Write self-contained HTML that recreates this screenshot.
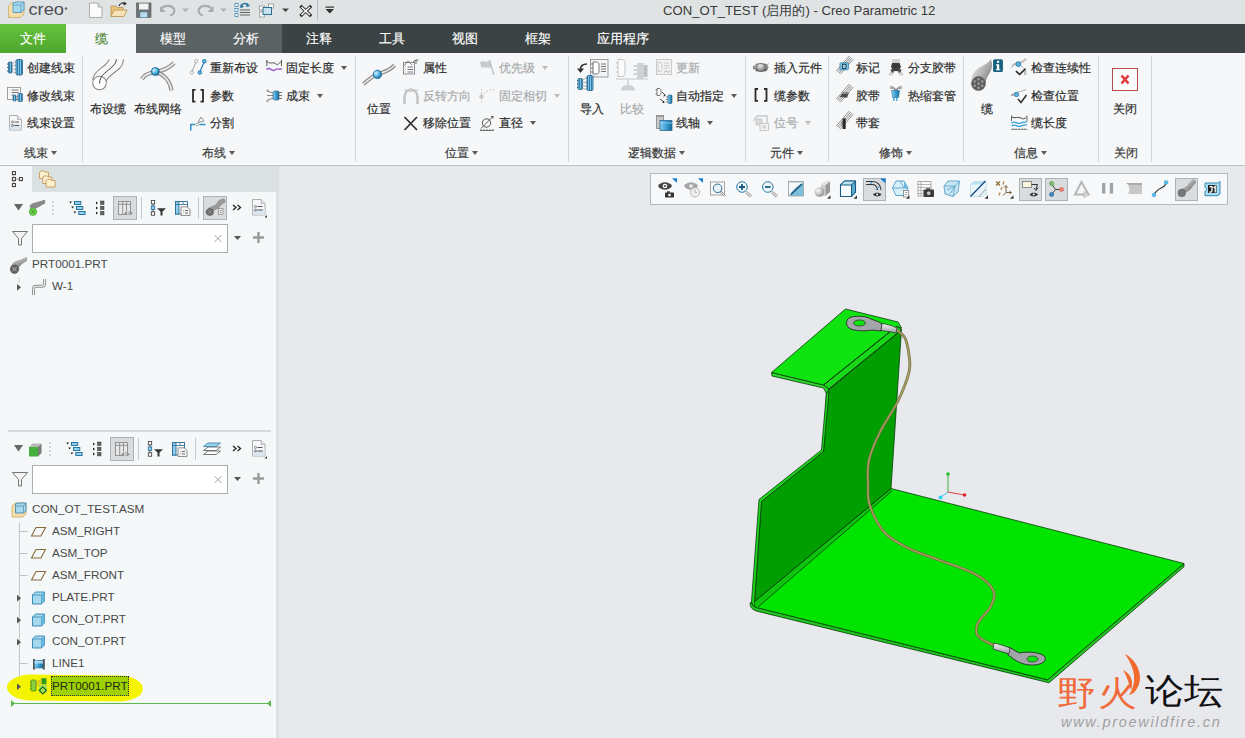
<!DOCTYPE html>
<html><head><meta charset="utf-8">
<style>
*{margin:0;padding:0;box-sizing:border-box}
html,body{width:1245px;height:738px;overflow:hidden;background:#e7e8ec;font-family:"Liberation Sans",sans-serif;font-size:12px;color:#333}
.a{position:absolute}
#title{left:0;top:0;width:1245px;height:24px;background:#dfe3e4}
#tabs{left:0;top:24px;width:1245px;height:29px;background:#3b4345}
.tab{position:absolute;top:0;height:29px;line-height:29px;text-align:center;color:#fff;font-size:13.4px;-webkit-text-stroke:0.15px currentColor}
#ribbon{left:0;top:53px;width:1245px;height:113px;background:#f5f7f8;border-bottom:1px solid #b9c0c1;box-shadow:inset 0 -1px 0 #fdfefe}
.sep{position:absolute;top:3px;width:1px;height:106px;background:#d3d7d9}
.t{position:absolute;white-space:nowrap;font-size:12px;line-height:14px;color:#2e2e2e;-webkit-text-stroke:0.2px #2e2e2e}
.t.g{color:#a9abad;-webkit-text-stroke:0.2px #a9abad}
.gl{position:absolute;top:146px;white-space:nowrap;font-size:12px;line-height:14px;color:#3a3a3a;-webkit-text-stroke:0.2px #3a3a3a}
.dd{display:inline-block;width:0;height:0;border-left:3.7px solid transparent;border-right:3.7px solid transparent;border-top:4px solid #5a5a5a;vertical-align:middle;margin-left:3px;position:relative;top:-1px}
.vs{top:56px;width:1px;height:106px;background:#d3d7d9}
.g2{border-top-color:#bbb}
.sel{width:24px;height:24px;background:#d9dcde;border:1px solid #aeb2b5}
.sbox{left:32px;width:196px;height:29px;background:#fff;border:1px solid #a9aeb1}
.tr{font-size:11.7px;color:#484848;-webkit-text-stroke:0}
#lp{left:0;top:166px;width:279px;height:572px;background:#dbe0e0}
#vp{left:279px;top:166px;width:966px;height:572px;background:#e8e9ed}
</style></head><body>
<div id="title" class="a"></div>
<div class="a" style="left:663px;top:3px;font-size:13.15px;line-height:16px;color:#3a3a3a;white-space:nowrap" id="ttl">CON_OT_TEST (启用的) - Creo Parametric 12</div>
<div class="a" style="left:317px;top:0px;width:1px;height:21px;background:#b9bec0"></div>
<!-- title icons -->
<svg class="a" style="left:0;top:0" width="340" height="24" viewBox="0 0 340 24">
 <!-- creo logo -->
 <path d="M8.5,6 L12,2.5 L24,2.5 L24,14 L20.5,17.5 L8.5,17.5Z" fill="#f6deaa" stroke="#c8a868" stroke-width="0.8"/>
 <path d="M13,3 L16,2 L24,2 L24,10 L21,12.5 L13,12.5Z" fill="#a6d8ee" stroke="#4a90b8" stroke-width="0.8"/>
 <path d="M13,5 L21,5 L21,12.5 M21,5 L24,2" fill="none" stroke="#4a90b8" stroke-width="0.7"/>
 <text x="28.5" y="14.5" font-family="Liberation Sans" font-size="16.5" fill="#4b5054" textLength="35.5" lengthAdjust="spacingAndGlyphs">creo</text>
 <circle cx="66" cy="8.5" r="1.2" fill="#666"/>
 <!-- new -->
 <path d="M89.5,3 L98,3 L102,7 L102,17.5 L89.5,17.5Z" fill="#fbfbfb" stroke="#9a9a9a" stroke-width="0.8"/>
 <path d="M98,3 L98,7 L102,7" fill="#ddd" stroke="#9a9a9a" stroke-width="0.7"/>
 <!-- open -->
 <path d="M111,16.5 L111,6 L116,6 L117.5,7.5 L123,7.5 L123,10" fill="#e8c47c" stroke="#b8904c" stroke-width="0.8"/>
 <path d="M111,16.5 L114,10 L127,10 L124,16.5Z" fill="#f6e2b4" stroke="#b8904c" stroke-width="0.8"/>
 <path d="M119,6 C120,3 123,2.5 125,3.5" fill="none" stroke="#333" stroke-width="1.3"/>
 <path d="M124,1.5 L127,4 L123.5,5.5Z" fill="#333"/>
 <!-- save -->
 <rect x="136.5" y="3" width="14.5" height="14.5" fill="#6f7274" stroke="#555" stroke-width="0.6"/>
 <rect x="139" y="3.5" width="9.5" height="6" fill="#f4f4f4"/>
 <rect x="140" y="12" width="7.5" height="5.5" fill="#bcdcea" stroke="#4a8ab0" stroke-width="0.6"/>
 <!-- undo -->
 <path d="M162,8 C165,5 172,5 174,9 C175.5,12 173,15 170,15.5" fill="none" stroke="#a9acae" stroke-width="2.2"/>
 <path d="M160,6 L160,12 L166,12Z" fill="#a9acae"/>
 <path d="M182,8.5 L189,8.5 L185.5,12Z" fill="#b0b3b5"/>
 <!-- redo -->
 <path d="M211,8 C208,5 201,5 199,9 C197.5,12 200,15 203,15.5" fill="none" stroke="#a9acae" stroke-width="2.2"/>
 <path d="M213.5,6 L213.5,12 L207.5,12Z" fill="#a9acae"/>
 <path d="M220,8.5 L227,8.5 L223.5,12Z" fill="#b0b3b5"/>
 <!-- regen -->
 <rect x="235" y="3.5" width="3" height="3" fill="#fff" stroke="#3a88b8" stroke-width="0.8"/>
 <rect x="235" y="8.5" width="3" height="3" fill="#fff" stroke="#3a88b8" stroke-width="0.8"/>
 <rect x="235" y="13.5" width="3" height="3" fill="#fff" stroke="#3a88b8" stroke-width="0.8"/>
 <path d="M240,10 L250,10 M240,12.5 L250,12.5 M240,15 L250,15" stroke="#555" stroke-width="0.9"/>
 <path d="M241,6 C242,3 246,3 248,5" fill="none" stroke="#1f6fa0" stroke-width="1.5"/>
 <path d="M247,3 L250,6 L246,7Z" fill="#1f6fa0"/>
 <path d="M241,4 L240,8 L244,7Z" fill="#1f6fa0"/>
 <!-- window -->
 <rect x="259.5" y="6" width="5" height="4" fill="#fff" stroke="#888" stroke-width="0.7"/>
 <rect x="259.5" y="12" width="5" height="5" fill="#fff" stroke="#888" stroke-width="0.7"/>
 <rect x="268.5" y="4" width="5" height="4" fill="#fff" stroke="#888" stroke-width="0.7"/>
 <rect x="263" y="7.5" width="8.5" height="7" fill="#c6e2f0" stroke="#2e6d92" stroke-width="1"/>
 <path d="M282,8.5 L289,8.5 L285.5,12Z" fill="#444"/>
 <!-- close -->
 <path d="M301.5,7 L310,15 M310,7 L301.5,15" stroke="#2a2a2a" stroke-width="3.2" stroke-linecap="square"/>
 <path d="M301.5,7 L310,15 M310,7 L301.5,15" stroke="#fff" stroke-width="1.5"/>
 <!-- custom dropdown -->
 <rect x="325.5" y="6.5" width="8.5" height="1.2" fill="#333"/>
 <path d="M325.5,9 L334,9 L329.75,13.5Z" fill="#333"/>
</svg>


<div id="tabs" class="a">
  <div class="tab" style="left:0;width:66px;background:linear-gradient(#66c23e,#4ea62c)">文件</div>
  <div class="tab" style="left:66px;width:70px;background:#f5f7f8;color:#3f7f2a">缆</div>
  <div class="tab" style="left:136px;width:146px;background:#5a6264"></div>
  <div class="tab" style="left:136px;width:73px">模型</div>
  <div class="tab" style="left:209px;width:73px">分析</div>
  <div class="tab" style="left:282px;width:73px">注释</div>
  <div class="tab" style="left:355px;width:73px">工具</div>
  <div class="tab" style="left:428px;width:73px">视图</div>
  <div class="tab" style="left:501px;width:73px">框架</div>
  <div class="tab" style="left:574px;width:98px">应用程序</div>
</div>

<div id="ribbon" class="a"></div>
<!-- separators -->
<div class="a vs" style="left:82px"></div>
<div class="a vs" style="left:355px"></div>
<div class="a vs" style="left:568px"></div>
<div class="a vs" style="left:745px"></div>
<div class="a vs" style="left:828px"></div>
<div class="a vs" style="left:963px"></div>
<div class="a vs" style="left:1098px"></div>
<div class="a vs" style="left:1151px"></div>
<!-- group 1 -->
<div class="t" style="left:27px;top:61px">创建线束</div>
<div class="t" style="left:27px;top:89px">修改线束</div>
<div class="t" style="left:27px;top:116px">线束设置</div>
<div class="gl" style="left:24px">线束<span class="dd"></span></div>
<!-- group 2 -->
<div class="t" style="left:90px;top:102px">布设缆</div>
<div class="t" style="left:134px;top:102px">布线网络</div>
<div class="t" style="left:210px;top:61px">重新布设</div>
<div class="t" style="left:210px;top:89px">参数</div>
<div class="t" style="left:210px;top:116px">分割</div>
<div class="t" style="left:286px;top:61px">固定长度<span class="dd" style="margin-left:7px"></span></div>
<div class="t" style="left:286px;top:89px">成束<span class="dd" style="margin-left:7px"></span></div>
<div class="gl" style="left:202px">布线<span class="dd"></span></div>
<!-- group 3 -->
<div class="t" style="left:367px;top:102px">位置</div>
<div class="t" style="left:423px;top:61px">属性</div>
<div class="t g" style="left:423px;top:89px">反转方向</div>
<div class="t" style="left:423px;top:116px">移除位置</div>
<div class="t g" style="left:499px;top:61px">优先级<span class="dd g2" style="margin-left:7px"></span></div>
<div class="t g" style="left:499px;top:89px">固定相切<span class="dd g2" style="margin-left:7px"></span></div>
<div class="t" style="left:499px;top:116px">直径<span class="dd" style="margin-left:7px"></span></div>
<div class="gl" style="left:445px">位置<span class="dd"></span></div>
<!-- group 4 -->
<div class="t" style="left:580px;top:102px">导入</div>
<div class="t g" style="left:620px;top:102px">比较</div>
<div class="t g" style="left:676px;top:61px">更新</div>
<div class="t" style="left:676px;top:89px">自动指定<span class="dd" style="margin-left:7px"></span></div>
<div class="t" style="left:676px;top:116px">线轴<span class="dd" style="margin-left:7px"></span></div>
<div class="gl" style="left:628px">逻辑数据<span class="dd"></span></div>
<!-- group 5 -->
<div class="t" style="left:774px;top:61px">插入元件</div>
<div class="t" style="left:774px;top:89px">缆参数</div>
<div class="t g" style="left:774px;top:116px">位号<span class="dd g2" style="margin-left:7px"></span></div>
<div class="gl" style="left:770px">元件<span class="dd"></span></div>
<!-- group 6 -->
<div class="t" style="left:856px;top:61px">标记</div>
<div class="t" style="left:856px;top:89px">胶带</div>
<div class="t" style="left:856px;top:116px">带套</div>
<div class="t" style="left:908px;top:61px">分支胶带</div>
<div class="t" style="left:908px;top:89px">热缩套管</div>
<div class="gl" style="left:879px">修饰<span class="dd"></span></div>
<!-- group 7 -->
<div class="t" style="left:981px;top:102px">缆</div>
<div class="t" style="left:1031px;top:61px">检查连续性</div>
<div class="t" style="left:1031px;top:89px">检查位置</div>
<div class="t" style="left:1031px;top:116px">缆长度</div>
<div class="gl" style="left:1014px">信息<span class="dd"></span></div>
<!-- group 8 -->
<div class="t" style="left:1113px;top:102px">关闭</div>
<div class="gl" style="left:1114px">关闭</div>

<!-- ribbon icons -->
<svg class="a" style="left:0;top:53px" width="1245" height="112" viewBox="0 53 1245 112">
<defs>
 <linearGradient id="bl" x1="0" y1="0" x2="1" y2="0"><stop offset="0" stop-color="#8fd0f0"/><stop offset="0.5" stop-color="#3a9fd4"/><stop offset="1" stop-color="#1e6a98"/></linearGradient>
 <pattern id="rib" width="2" height="4" patternUnits="userSpaceOnUse"><rect width="2" height="4" fill="#7cc4ea"/><rect x="1.2" width="0.8" height="4" fill="#1e6a9a"/></pattern>
 <radialGradient id="ball" cx="0.35" cy="0.35" r="0.7"><stop offset="0" stop-color="#d8f2ff"/><stop offset="0.5" stop-color="#5ab8e4"/><stop offset="1" stop-color="#1a6a98"/></radialGradient>
 <linearGradient id="tube" x1="0" y1="0" x2="0" y2="1"><stop offset="0" stop-color="#f0f0f0"/><stop offset="0.5" stop-color="#a8a8a8"/><stop offset="1" stop-color="#e0e0e0"/></linearGradient>
 <radialGradient id="cab" cx="0.4" cy="0.3" r="0.8"><stop offset="0" stop-color="#f0f0f0"/><stop offset="1" stop-color="#606060"/></radialGradient>
</defs>
<!-- 创建线束 -->
<g>
 <rect x="8.5" y="62" width="3.5" height="11" rx="0.8" fill="url(#rib)" stroke="#1e5a80" stroke-width="0.7"/>
 <path d="M8.5,64 L7,64 M8.5,67.5 L7,67.5 M8.5,71 L7,71" stroke="#1e5a80" stroke-width="0.9"/>
 <path d="M12,63.5 L16,61.5 M12,66 L16,65 M12,69 L16,69.5 M12,71.5 L16,73" stroke="#999" stroke-width="0.7"/>
 <rect x="16" y="59.5" width="6.5" height="15.5" rx="1.5" fill="url(#rib)" stroke="#1e5a80" stroke-width="0.8"/>
</g>
<!-- 修改线束 -->
<g>
 <rect x="7.5" y="87.5" width="13" height="12" fill="#fafafa" stroke="#8a8a8a" stroke-width="0.8"/>
 <path d="M9.5,90 L9.8,90 M9.5,92.5 L9.8,92.5 M9.5,95 L9.8,95 M11.5,90 L18.5,90 M11.5,92.5 L18.5,92.5 M11.5,95 L14,95" stroke="#666" stroke-width="0.9"/>
 <rect x="13" y="95" width="3" height="6" rx="0.8" fill="url(#rib)" stroke="#1e5a80" stroke-width="0.6"/>
 <path d="M16,96.5 L18,96.5 M16,99 L18,99" stroke="#777" stroke-width="0.7"/>
 <rect x="18" y="93.5" width="4.5" height="8" rx="1" fill="url(#rib)" stroke="#1e5a80" stroke-width="0.7"/>
</g>
<!-- 线束设置 -->
<g>
 <path d="M9.5,115.5 L17.5,115.5 L21.5,119.5 L21.5,130 L9.5,130Z" fill="#f6f7f8" stroke="#9a9a9a" stroke-width="0.8"/>
 <path d="M17.5,115.5 L17.5,119.5 L21.5,119.5" fill="#dde" stroke="#9a9a9a" stroke-width="0.6"/>
 <rect x="9.7" y="124" width="11.6" height="5.8" fill="#dce6ee"/>
 <circle cx="12.5" cy="122" r="1" fill="none" stroke="#555" stroke-width="0.7"/><path d="M14.5,122 L19,122" stroke="#555"/>
 <circle cx="12.5" cy="125.5" r="1" fill="none" stroke="#555" stroke-width="0.7"/><path d="M14.5,125.5 L19,125.5" stroke="#555"/>
</g>
<!-- 布设缆 -->
<g fill="none" stroke="#8a8a8a" stroke-width="1.1">
 <circle cx="99.5" cy="83" r="6.8" fill="#fff"/>
 <path d="M92.8,80 C93,72 102,68 105,65 C107.5,62.5 109,61 109.2,59.3"/>
 <path d="M106,81.5 C108,76 116,72 120,68 C122.5,65 123.5,62 123.6,59.3"/>
 <path d="M99.5,83.5 C99.5,75 108,71 112,67 C115,64 116.3,62 116.3,59.3" stroke="#444" stroke-width="1"/>
</g>
<!-- 布线网络 -->
<g fill="none">
 <path d="M142,79 C144,75 149,73 155,72 C162,71 169,68 174,63" stroke="#8a8a8a" stroke-width="4.2"/>
 <path d="M142,79 C144,75 149,73 155,72 C162,71 169,68 174,63" stroke="#e8e8e8" stroke-width="1.8"/>
 <path d="M156,72 C163,74 170,80 171.5,90.5" stroke="#8a8a8a" stroke-width="4.2"/>
 <path d="M156,72 C163,74 170,80 171.5,90.5" stroke="#e8e8e8" stroke-width="1.8"/>
 <circle cx="155.3" cy="71.5" r="4" fill="url(#ball)" stroke="#16628c" stroke-width="0.8"/>
</g>
<!-- 重新布设 -->
<g>
 <path d="M191.8,72 L196.2,61.5" stroke="#9a9a9a" stroke-width="0.9"/>
 <circle cx="191.8" cy="72.5" r="1.6" fill="#fff" stroke="#9a9a9a" stroke-width="0.8"/>
 <circle cx="196.2" cy="61.2" r="1.6" fill="#fff" stroke="#9a9a9a" stroke-width="0.8"/>
 <path d="M199.8,72 L204.3,61.5" stroke="#2d7fb0" stroke-width="1.2"/>
 <circle cx="199.8" cy="72.5" r="1.8" fill="#5ab8e4" stroke="#1e6a98" stroke-width="0.8"/>
 <circle cx="204.3" cy="61.2" r="1.8" fill="#5ab8e4" stroke="#1e6a98" stroke-width="0.8"/>
</g>
<!-- 参数 -->
<path d="M195.5,89.8 L193,89.8 L193,101.6 L195.5,101.6 M200.5,89.8 L203,89.8 L203,101.6 L200.5,101.6" fill="none" stroke="#2a2a2a" stroke-width="1.8"/>
<!-- 分割 -->
<g>
 <path d="M190.8,130.5 L190.8,124.5 L195,124.5" fill="none" stroke="#2d8fc8" stroke-width="1.5"/>
 <path d="M199.5,124.5 L205.5,124.5" stroke="#2d8fc8" stroke-width="1.5"/>
 <circle cx="197.2" cy="124.5" r="1.3" fill="#fff" stroke="#888" stroke-width="0.7"/>
 <path d="M198,122.5 L201,117 L204,121Z" fill="none" stroke="#777" stroke-width="0.8"/>
</g>
<!-- 固定长度 -->
<g fill="none">
 <path d="M266.8,60 L266.8,66 M281.5,60 L281.5,66" stroke="#444" stroke-width="0.9"/>
 <path d="M267,61.5 C271,65 273,61 276,64 C278,66 279,63 281,61.5" stroke="#444" stroke-width="0.9"/>
 <path d="M266.5,69.5 C270,66 272.5,72.5 275,70 C278,67 279.5,71 282,68.5" stroke="#9a5ad0" stroke-width="1.4"/>
</g>
<!-- 成束 -->
<g>
 <path d="M267,91 L273,93 M267,95.5 L273,95.5 M267,100.5 L273,98" stroke="#888" stroke-width="1.1"/>
 <circle cx="267.5" cy="90.5" r="1.2" fill="#aaa"/><circle cx="267.5" cy="101" r="1.2" fill="#aaa"/>
 <rect x="273" y="91" width="6" height="9" rx="1.5" fill="url(#bl)" stroke="#1e5a80" stroke-width="0.6"/>
 <path d="M279,92.5 L282,92.5 M279,95.5 L282,95.5 M279,98.5 L282,98.5" stroke="#555" stroke-width="0.8"/>
</g>
<!-- 位置 big -->
<g fill="none">
 <path d="M363.5,84 C368,80 373,76 378,74 C384,72 390,71 394.5,65" stroke="#8a8a8a" stroke-width="4"/>
 <path d="M363.5,84 C368,80 373,76 378,74 C384,72 390,71 394.5,65" stroke="#e6e6e6" stroke-width="1.6"/>
 <circle cx="377.4" cy="74.4" r="4.2" fill="url(#ball)" stroke="#16628c" stroke-width="0.8"/>
</g>
<!-- 属性 -->
<g>
 <rect x="403.5" y="62.5" width="11" height="11.5" fill="#f8f8f8" stroke="#777" stroke-width="0.8"/>
 <path d="M404,66 L408,61 L412,65" fill="none" stroke="#666" stroke-width="0.8"/>
 <path d="M405.5,67 L406,67 M405.5,69.5 L406,69.5 M405.5,72 L406,72 M407.5,67 L413,67 M407.5,69.5 L413,69.5 M407.5,72 L413,72" stroke="#556" stroke-width="0.8"/>
 <path d="M413,62 L416,60 L418.5,60 M416,60 L416,64" fill="none" stroke="#444" stroke-width="0.8"/>
</g>
<!-- 反转方向 gray -->
<g fill="none" stroke="#c2c4c6">
 <path d="M404.5,104 L404.5,97 C404.5,92 408,90 411,90 C414,90 417.5,92 417.5,97 L417.5,104" stroke-width="2.6"/>
 <path d="M404,90 L418.5,90" stroke-width="1"/>
 <circle cx="411" cy="90" r="1.6" fill="#d8d8d8"/>
</g>
<!-- 移除位置 -->
<path d="M404.5,117 L417,130 M417,117 L404.5,130" stroke="#333" stroke-width="1.8"/>
<!-- 优先级 gray -->
<g>
 <path d="M480,62 C483,60 486,63 490,61 L491.5,67 C488,69 484,66 481.5,68Z" fill="#c8cacc"/>
 <path d="M489.5,60 L493.8,75" stroke="#c0c2c4" stroke-width="1.4"/>
</g>
<!-- 固定相切 gray -->
<g fill="none" stroke="#bbb" stroke-width="0.9">
 <path d="M481.5,89 L481.5,104" stroke-dasharray="1.5,1.5"/>
 <circle cx="481.5" cy="96.5" r="1.8" fill="#ccc"/>
 <path d="M483.5,94 C486,91 490,89.5 494.5,89.5" stroke-dasharray="2,1.5"/>
</g>
<!-- 直径 -->
<g fill="none" stroke="#444" stroke-width="0.9">
 <circle cx="486.5" cy="123" r="4.2"/>
 <path d="M481,128.5 L493,116.5"/>
 <path d="M491,116.5 L493,116.5 L493,118.5"/>
 <path d="M480,130.5 L494,130.5 M481,129 L481,130.5 M484,129 L484,130.5 M487,129 L487,130.5 M490,129 L490,130.5 M493,129 L493,130.5" stroke-width="0.7"/>
</g>
<!-- 导入 -->
<g>
 <rect x="590.5" y="59.5" width="17.5" height="17.5" fill="#f2f4f6" stroke="#888" stroke-width="0.8"/>
 <path d="M593,62 L596.5,62 C598,62 599,63 599,65 L599,71 C599,73 598,74 596.5,74 L593,74Z" fill="#fff" stroke="#555" stroke-width="0.8"/>
 <path d="M591,64 L593,64 M591,68 L593,68 M591,72 L593,72" stroke="#555" stroke-width="0.8"/>
 <path d="M601,64 L606,64 M601,66.5 L606,66.5 M601,69 L606,69 M601,71.5 L606,71.5" stroke="#555" stroke-width="0.8"/>
 <path d="M587,64 C583,64 580.5,66 580.5,69.5" fill="none" stroke="#333" stroke-width="1.6"/>
 <path d="M577,68.5 L584,68.5 L580.5,73Z" fill="#333"/>
 <rect x="578" y="78.5" width="4.5" height="11" rx="1" fill="url(#rib)" stroke="#1e5a80" stroke-width="0.7"/>
 <path d="M578,80.5 L577,80.5 M578,84 L577,84 M578,87.5 L577,87.5" stroke="#1e5a80"/>
 <path d="M582.5,80 L587,77.5 M582.5,83 L587,82 M582.5,86 L587,86 M582.5,88.5 L587,89.5" stroke="#999" stroke-width="0.8"/>
 <rect x="587" y="75.5" width="6" height="15" rx="1.5" fill="url(#rib)" stroke="#1e5a80" stroke-width="0.8"/>
</g>
<!-- 比较 gray -->
<g stroke="#c4c6c8" fill="none">
 <path d="M618,59.5 L622,59.5 C624,59.5 625,61 625,63 L625,73 C625,75 624,76.5 622,76.5 L618,76.5Z" fill="#fbfbfb" stroke-width="1"/>
 <path d="M616,63 L618,63 M616,67.5 L618,67.5 M616,72 L618,72" stroke-width="1.2"/>
 <rect x="637" y="63" width="6.5" height="16" fill="#cfd1d3" stroke="none"/>
 <rect x="643.5" y="65" width="4" height="12" fill="#bcbec0" stroke="none"/>
 <path d="M633.5,66 L637,66 M633.5,70 L637,70 M633.5,74 L637,74" stroke-width="1.4"/>
 <path d="M616,79 L648,79 M628,79 L628,85" stroke-width="1.2"/>
 <path d="M621,90.5 L635,90.5 C635,87 632,85 628,85 C624,85 621,87 621,90.5Z" fill="#cfd1d3" stroke="none"/>
</g>
<!-- 更新 gray -->
<g stroke="#c4c6c8" fill="none" stroke-width="0.9">
 <rect x="656.5" y="59.5" width="15" height="15" fill="#f2f2f2"/>
 <path d="M658,62.5 L660,62.5 C661.5,62.5 662,64 662,65 L662,69 C662,70 661.5,71.5 660,71.5 L658,71.5Z"/>
 <path d="M664,63 L669.5,63 M664,65.5 L669.5,65.5 M664,68 L669.5,68"/>
 <path d="M664,72.5 L666,70.5 L668,72.5 L670,70.5" stroke-width="1.1"/>
</g>
<!-- 自动指定 -->
<g>
 <path d="M657,88.5 L659,88.5 C660.5,88.5 661,90 661,91 L661,93 C661,94 660.5,95.5 659,95.5 L657,95.5Z" fill="#fff" stroke="#555" stroke-width="0.8"/>
 <path d="M655.5,90 L657,90 M655.5,94 L657,94" stroke="#555" stroke-width="0.7"/>
 <path d="M662,92 L665,95 M660,99 L664,102" stroke="#333" stroke-width="0.9"/>
 <path d="M665.5,96 L663,96.5 L665,94Z M664.5,103 L662,103 L664,100.5Z" fill="#333"/>
 <rect x="668" y="95" width="4" height="8.5" rx="1" fill="url(#bl)" stroke="#1e5a80" stroke-width="0.6"/>
 <path d="M666,97 L668,97 M666,99.5 L668,99.5 M666,102 L668,102" stroke="#555" stroke-width="0.7"/>
</g>
<!-- 线轴 -->
<g>
 <rect x="656.5" y="115.5" width="7" height="13" fill="#c8caca" stroke="#777" stroke-width="0.7"/>
 <path d="M656.5,115.5 L664,115.5 L662,117 L658,117Z" fill="#999"/>
 <rect x="660" y="120.5" width="12" height="10" fill="url(#bl)" stroke="#1e5a80" stroke-width="0.7"/>
 <path d="M660,123 L672,123" stroke="#8fd8f8" stroke-width="0.8"/>
</g>
<!-- 插入元件 -->
<g>
 <path d="M753.5,66 L756,66 L756,64 L765,64 C767,64 767.5,66 767.5,67.5 C767.5,69 767,71 765,71 L756,71 L756,69 L753.5,69Z" fill="url(#cab)" stroke="#333" stroke-width="0.5"/>
 <ellipse cx="761" cy="67.5" rx="4.5" ry="4.2" fill="url(#cab)" stroke="#444" stroke-width="0.5"/>
 <path d="M766,66 L769,63.5 M766.5,68.5 L769,67" stroke="#999" stroke-width="0.8"/>
</g>
<!-- 缆参数 -->
<path d="M758,89 L755.5,89 L755.5,100.8 L758,100.8 M764,89 L766.5,89 L766.5,100.8 L764,100.8" fill="none" stroke="#2a2a2a" stroke-width="1.8"/>
<!-- 位号 gray -->
<g fill="none" stroke="#c4c6c8">
 <path d="M753.5,121 L757,116 L767,116 L767,124" stroke-width="1.3"/>
 <rect x="756" y="119" width="6" height="6" fill="#d8d8d8" stroke-width="0.8"/>
 <rect x="760" y="123.5" width="8.5" height="7" fill="#f2f2f2" stroke-width="0.9"/>
 <path d="M764.2,125 L764.2,129 M762.2,127 L766.2,127" stroke-width="1"/>
</g>
<!-- 标记 -->
<g><path d="M836.3,71.0 L849.3,56.0" stroke="#7a7a7a" stroke-width="0.85"/><path d="M837.6,72.1 L850.6,57.1" stroke="#7a7a7a" stroke-width="0.85"/><path d="M838.9,73.2 L851.9,58.2" stroke="#7a7a7a" stroke-width="0.85"/><path d="M840.2,74.3 L853.2,59.3" stroke="#7a7a7a" stroke-width="0.85"/>
 <rect x="840" y="62.8" width="8.4" height="7" rx="1" fill="#8fd0ec" stroke="#2a7aa8" stroke-width="0.8"/>
 <rect x="842.3" y="64.2" width="3.8" height="4.2" fill="none" stroke="#123" stroke-width="0.8"/>
</g>
<!-- 胶带 -->
<g><path d="M836.3,99.0 L849.3,84.0" stroke="#7a7a7a" stroke-width="0.85"/><path d="M837.6,100.1 L850.6,85.1" stroke="#7a7a7a" stroke-width="0.85"/><path d="M838.9,101.2 L851.9,86.2" stroke="#7a7a7a" stroke-width="0.85"/><path d="M840.2,102.3 L853.2,87.3" stroke="#7a7a7a" stroke-width="0.85"/>
 <path d="M839.5,97 L843,92.5 L849,92.5 L847,97.8Z" fill="#4a4a4a"/>
 <path d="M843,92.5 L849,92.5 L848.5,94 L842,94Z" fill="#888"/>
</g>
<!-- 带套 -->
<g><path d="M836.3,126.0 L849.3,111.0" stroke="#7a7a7a" stroke-width="0.85"/><path d="M837.6,127.1 L850.6,112.1" stroke="#7a7a7a" stroke-width="0.85"/><path d="M838.9,128.2 L851.9,113.2" stroke="#7a7a7a" stroke-width="0.85"/><path d="M840.2,129.3 L853.2,114.3" stroke="#7a7a7a" stroke-width="0.85"/>
 <rect x="842.6" y="118.4" width="3.1" height="10.6" fill="#2a2a2a"/>
 <rect x="841.5" y="121" width="1.2" height="5" fill="#777"/>
</g>
<!-- 分支胶带 -->
<g>
 <path d="M893,59 L893,65 M895,59 L895,65 M897,59 L897,65 M899,59 L899,65" stroke="#999" stroke-width="0.8"/>
 <path d="M889,75 L894,69 M891,75.5 L895.5,70 M903,75 L898,69 M901,75.5 L896.5,70" stroke="#999" stroke-width="0.9"/>
 <path d="M892,63 L899.5,63 L901,67 L898,71 L894,71 L891,67Z" fill="#3a3a3a"/>
 <path d="M890.5,70 L893.5,67.5 L895,70 L892,73Z M901.5,70 L898.5,67.5 L897,70 L900,73Z" fill="#4a4a4a"/>
</g>
<!-- 热缩套管 -->
<g>
 <path d="M896,91 C895,88.5 893,87.5 891.5,87.5 M896,91 C897,88.5 899,87.5 900.5,87.5" stroke="#888" stroke-width="1.4" fill="none"/>
 <circle cx="891.5" cy="87.5" r="1.3" fill="#bbb" stroke="#777" stroke-width="0.5"/>
 <circle cx="900.5" cy="87.5" r="1.3" fill="#bbb" stroke="#777" stroke-width="0.5"/>
 <path d="M891.7,90.5 L899.5,90.5 L898.5,97.5 L892.7,97.5Z" fill="url(#bl)" stroke="#1e6a98" stroke-width="0.6"/>
 <path d="M893.8,97.5 L893.8,101 M896.8,97.5 L896.8,101" stroke="#3a9fd4" stroke-width="1.3"/>
</g>
<!-- 缆 big -->
<g>
 <defs><linearGradient id="tube2" x1="0" y1="0" x2="1" y2="0.6"><stop offset="0" stop-color="#f4f4f4"/><stop offset="0.6" stop-color="#b8b8b8"/><stop offset="1" stop-color="#8a8a8a"/></linearGradient></defs>
 <path d="M971.4,79.5 C972,72 978,68 984,65 C988,63 990,61 990.4,59 C992,61 992.5,64 992,67 C991,72 988,75 987,78 C986,80 985.8,82 985.5,83 Z" fill="url(#tube2)"/>
 <circle cx="978.5" cy="83.6" r="7" fill="#5e5e5e" stroke="#4a4a4a" stroke-width="0.5"/>
 <g fill="#9a9a9a"><circle cx="978.5" cy="83.6" r="1.3"/><circle cx="978.5" cy="79.3" r="1.3"/><circle cx="978.5" cy="87.9" r="1.3"/><circle cx="974.8" cy="81.5" r="1.3"/><circle cx="982.2" cy="81.5" r="1.3"/><circle cx="974.8" cy="85.7" r="1.3"/><circle cx="982.2" cy="85.7" r="1.3"/></g>
 <rect x="993.1" y="59.3" width="9.8" height="12.7" rx="1.5" fill="#17607f"/>
 <rect x="997" y="60.8" width="2.2" height="2" fill="#fff"/>
 <path d="M996,64.3 L999.2,64.3 L999.2,69.2 L1000.3,69.2 L1000.3,70.3 L995.8,70.3 L995.8,69.2 L996.9,69.2 L996.9,65.4 L996,65.4Z" fill="#fff"/>
</g>
<!-- 检查连续性 -->
<g fill="none">
 <path d="M1011.5,67.5 C1013,65 1015,64.3 1018,64.2 M1012,66 C1013.5,63.5 1015.5,63 1018,63" stroke="#9a9a9a" stroke-width="0.8"/>
 <path d="M1018.5,64.2 C1021,63.5 1023,62 1026.5,59.5 M1018.5,63 C1021,62 1023,60.5 1026,58.5" stroke="#9a9a9a" stroke-width="0.8"/>
 <path d="M1020,65 L1023.5,68 M1024.5,71 L1024.5,75 M1026,70.5 L1026,75" stroke="#9a9a9a" stroke-width="0.7"/>
 <path d="M1015.9,71.2 L1019.7,74.4 L1025.6,68.7" stroke="#333" stroke-width="1.7"/>
 <circle cx="1018.3" cy="64.1" r="2.4" fill="#5ab8e4" stroke="#1e6a98" stroke-width="0.8"/>
</g>
<!-- 检查位置 -->
<g fill="none">
 <path d="M1011.5,95 C1015,92 1021,92 1026,89.5" stroke="#9a9a9a" stroke-width="0.8"/>
 <path d="M1018,99 L1021,102.5 L1026.5,95" stroke="#333" stroke-width="1.6"/>
 <path d="M1011,95 L1014,95" stroke="#777"/>
 <circle cx="1016.5" cy="94.5" r="2.2" fill="#5ab8e4" stroke="#1e6a98" stroke-width="0.7"/>
</g>
<!-- 缆长度 -->
<g fill="none">
 <path d="M1011.5,115.5 L1011.5,121 M1027,115.5 L1027,121" stroke="#444" stroke-width="0.8"/>
 <path d="M1012,117 C1015,119 1018,116 1021,118 C1023,119.5 1025,119 1026.5,117" stroke="#333" stroke-width="0.9"/>
 <path d="M1011.5,123 C1015,120 1018,125 1021,123 C1024,121 1025,123 1027,121.5" stroke="#3a9fd4" stroke-width="1.3"/>
 <path d="M1011.5,126 C1015,123 1018,128 1021,126 C1024,124 1025,126 1027,124.5" stroke="#3a9fd4" stroke-width="1.3"/>
 <path d="M1011,129.5 L1027.5,129.5 M1013,128 L1013,129.5 M1016,128 L1016,129.5 M1019,128 L1019,129.5 M1022,128 L1022,129.5 M1025,128 L1025,129.5" stroke="#555" stroke-width="0.6"/>
</g>
<!-- 关闭 -->
<g>
 <rect x="1112.5" y="68.5" width="25" height="22" fill="#fbfbfb" stroke="#b03a3a" stroke-width="0.9"/>
 <path d="M1121.5,75.5 L1128.5,83.5 M1128.5,75.5 L1121.5,83.5" stroke="#e03a3a" stroke-width="2.6"/>
</g>
</svg>
<div id="lp" class="a"></div>
<div class="a" style="left:0;top:166px;width:32px;height:26px;background:#f4f6f7"></div>
<div class="a" style="left:0;top:192px;width:276px;height:546px;background:#f5f8f9"></div>
<!-- tree 1 toolbar -->
<div class="a sel" style="left:113px;top:196px"></div>
<div class="a sel" style="left:203px;top:196px"></div>
<div class="a" style="left:141px;top:197px;width:1px;height:22px;background:#c5c9cb"></div>
<div class="a" style="left:198px;top:197px;width:1px;height:22px;background:#c5c9cb"></div>
<div class="a sbox" style="top:224px"></div>
<div class="t tr" style="left:32px;top:257px">PRT0001.PRT</div>
<div class="t tr" style="left:52px;top:279px">W-1</div>
<!-- divider -->
<div class="a" style="left:8px;top:430px;width:263px;height:2px;background:#d5d9db"></div>
<!-- tree 2 toolbar -->
<div class="a sel" style="left:110px;top:437px"></div>
<div class="a" style="left:138px;top:438px;width:1px;height:22px;background:#c5c9cb"></div>
<div class="a" style="left:195px;top:438px;width:1px;height:22px;background:#c5c9cb"></div>
<div class="a sbox" style="top:465px"></div>
<!-- left panel icons -->
<svg class="a" style="left:0;top:0" width="280" height="738" viewBox="0 0 280 738">
<defs>
 <linearGradient id="bl2" x1="0" y1="0" x2="1" y2="0"><stop offset="0" stop-color="#8fd0f0"/><stop offset="0.5" stop-color="#3a9fd4"/><stop offset="1" stop-color="#1e6a98"/></linearGradient>
</defs>
<!-- panel tab icons -->
<rect x="12.4" y="171.6" width="3" height="3" fill="#fff" stroke="#333" stroke-width="1"/>
<rect x="12.4" y="177.6" width="3" height="3" fill="#fff" stroke="#333" stroke-width="1"/>
<rect x="12.4" y="183.6" width="3" height="3" fill="#fff" stroke="#333" stroke-width="1"/>
<rect x="19.4" y="177.6" width="3" height="3" fill="#fff" stroke="#333" stroke-width="1"/>
<path d="M13.9,174.6 L13.9,177.6 M13.9,180.6 L13.9,183.6 M15.4,179.1 L19.4,179.1" stroke="#777" stroke-width="0.7"/>
<g id="fold"><path d="M39.5,172 L41,171 L44,171 L45,172 L48.5,172 L48.5,178.5 L39.5,178.5Z" fill="#fdf0cc" stroke="#c09050" stroke-width="0.8"/></g>
<use href="#fold" x="3.3" y="5"/><use href="#fold" x="6.5" y="8.5"/>
<g transform="translate(0,0)">
 <path d="M14,204 L23,204 L18.5,210.5Z" fill="#666"/>
 <circle cx="52.9" cy="202" r="0.8" fill="#aaa"/><circle cx="52.9" cy="206" r="0.8" fill="#aaa"/><circle cx="52.9" cy="210" r="0.8" fill="#aaa"/><circle cx="52.9" cy="214" r="0.8" fill="#aaa"/>
 <path d="M69.2,201.5 L72,201.5 L70.6,203.5Z M71.2,206.5 L74,206.5 L72.6,208.5Z M73.5,211.5 L76.3,211.5 L74.9,213.5Z" fill="#222"/>
 <rect x="74.5" y="201.5" width="6.3" height="3" fill="#8fd0f0" stroke="#1e6a98" stroke-width="0.9"/>
 <rect x="76.5" y="206.5" width="6.3" height="3" fill="#8fd0f0" stroke="#1e6a98" stroke-width="0.9"/>
 <rect x="78.8" y="211.5" width="6.3" height="3" fill="#8fd0f0" stroke="#1e6a98" stroke-width="0.9"/>
 <path d="M96,201.5 L98,203 L96,204.5Z M96,206.5 L98,208 L96,209.5Z M96,211.5 L98,213 L96,214.5Z" fill="#222"/>
 <rect x="100.5" y="201" width="3.5" height="3.5" fill="#666" stroke="#333" stroke-width="0.5"/>
 <rect x="100.5" y="206.2" width="3.5" height="3.5" fill="#666" stroke="#333" stroke-width="0.5"/>
 <rect x="100.5" y="211.4" width="3.5" height="3.5" fill="#666" stroke="#333" stroke-width="0.5"/>
 <!-- columns w eye -->
 <rect x="118.5" y="201.5" width="12" height="13" fill="#e8e8e8" stroke="#8a8a8a" stroke-width="0.9"/>
 <path d="M118.5,204.3 L130.5,204.3 M122.7,201.5 L122.7,214.5 M126.5,201.5 L126.5,211" stroke="#8a8a8a" stroke-width="0.9"/>
 <path d="M124.2,213.3 C126,210.8 130.8,210.8 132.8,213.3 C130.8,215.8 126,215.8 124.2,213.3Z" fill="#8a8a8a"/>
 <circle cx="128.4" cy="213.3" r="1.5" fill="#eee"/><circle cx="128.4" cy="213.3" r="0.6" fill="#777"/>
 <!-- tree filter -->
 <rect x="151.3" y="200.5" width="3.4" height="3.4" fill="#fff" stroke="#333" stroke-width="0.8"/>
 <rect x="151.3" y="206" width="3.4" height="3.4" fill="#8fd0f0" stroke="#1e6a98" stroke-width="0.8"/>
 <rect x="151.3" y="211.8" width="3.4" height="3.4" fill="#fff" stroke="#333" stroke-width="0.8"/>
 <path d="M153,204 L153,206 M153,209.4 L153,211.8" stroke="#333" stroke-width="0.8"/>
 <path d="M157,208.3 L166,208.3 L162.5,211.5 L162.5,215.6 L160.5,215.6 L160.5,211.5Z" fill="#333"/>
 <!-- table -->
 <rect x="175.5" y="201.5" width="12" height="12.5" fill="#fff" stroke="#2a6a90" stroke-width="0.9"/>
 <rect x="175.5" y="201.5" width="3.5" height="12.5" fill="#8fd0f0" stroke="#2a6a90" stroke-width="0.9"/>
 <path d="M175.5,204.5 L187.5,204.5 M183,201.5 L183,204.5" stroke="#2a6a90" stroke-width="0.8"/>
 <path d="M181,206.8 L187,206.8 L190,209.5 L190,215.5 L181,215.5Z" fill="#f4f4f4" stroke="#777" stroke-width="0.8"/>
 <path d="M183,210.5 L183.5,210.5 M183,213 L183.5,213 M185,210.5 L188,210.5 M185,213 L188,213" stroke="#444" stroke-width="0.8"/>
 <!-- >> -->
 <path d="M233,205 L236,207.5 L233,210 M237.5,205 L240.5,207.5 L237.5,210" fill="none" stroke="#222" stroke-width="1.3"/>
 <!-- doc -->
 <path d="M252.5,199.5 L261,199.5 L265,203.5 L265,215 L252.5,215Z" fill="#f6f7f8" stroke="#9a9a9a" stroke-width="0.8"/>
 <rect x="252.8" y="209" width="12" height="5.8" fill="#dce6ee"/>
 <path d="M261,199.5 L261,203.5 L265,203.5" fill="#dde" stroke="#9a9a9a" stroke-width="0.6"/>
 <circle cx="255.5" cy="206.5" r="1" fill="none" stroke="#555" stroke-width="0.7"/><path d="M257.5,206.5 L262.5,206.5" stroke="#555"/>
 <circle cx="255.5" cy="210" r="1" fill="none" stroke="#555" stroke-width="0.7"/><path d="M257.5,210 L262.5,210" stroke="#555"/>
 <path d="M267,215 L267,217.5 L264.5,217.5Z" fill="#333"/>

 <!-- cable with green -->
 <path d="M29.5,206 C32,202.5 36,202.5 39,201.5 C41.5,200.7 43,200 45,199.8 L45.2,203.6 C43,204.5 41,205.5 39,207 C36,209 33,208.5 31,210Z" fill="#8a8a8a"/>
 <circle cx="33" cy="211.7" r="3.8" fill="#6cd04a" stroke="#48a838" stroke-width="0.6"/>
 <path d="M31.2,209.9 L34.8,213.5 M34.8,209.9 L31.2,213.5" stroke="#3a8a2a" stroke-width="0.8"/>
 <!-- selected cable icon -->
 <path d="M208,212 C212,206 216,210 219,204 C220,202 221,201.5 223,201" fill="none" stroke="#999" stroke-width="5" stroke-linecap="round"/>
 <circle cx="210" cy="212" r="3.8" fill="#666"/>
 <path d="M208,210 L212,214 M212,210 L208,214" stroke="#aaa" stroke-width="0.6"/>
 <rect x="218.5" y="208.5" width="4.5" height="6" fill="#eee" stroke="#777" stroke-width="0.6"/>
 <path d="M219.8,210.5 L221.8,210.5 M219.8,212.5 L221.8,212.5" stroke="#555" stroke-width="0.6"/>
</g><g transform="translate(0,241)">
 <path d="M14,204 L23,204 L18.5,210.5Z" fill="#666"/>
<g transform="translate(-3,0)">
 <circle cx="52.9" cy="202" r="0.8" fill="#aaa"/><circle cx="52.9" cy="206" r="0.8" fill="#aaa"/><circle cx="52.9" cy="210" r="0.8" fill="#aaa"/><circle cx="52.9" cy="214" r="0.8" fill="#aaa"/>
 <path d="M69.2,201.5 L72,201.5 L70.6,203.5Z M71.2,206.5 L74,206.5 L72.6,208.5Z M73.5,211.5 L76.3,211.5 L74.9,213.5Z" fill="#222"/>
 <rect x="74.5" y="201.5" width="6.3" height="3" fill="#8fd0f0" stroke="#1e6a98" stroke-width="0.9"/>
 <rect x="76.5" y="206.5" width="6.3" height="3" fill="#8fd0f0" stroke="#1e6a98" stroke-width="0.9"/>
 <rect x="78.8" y="211.5" width="6.3" height="3" fill="#8fd0f0" stroke="#1e6a98" stroke-width="0.9"/>
 <path d="M96,201.5 L98,203 L96,204.5Z M96,206.5 L98,208 L96,209.5Z M96,211.5 L98,213 L96,214.5Z" fill="#222"/>
 <rect x="100.5" y="201" width="3.5" height="3.5" fill="#666" stroke="#333" stroke-width="0.5"/>
 <rect x="100.5" y="206.2" width="3.5" height="3.5" fill="#666" stroke="#333" stroke-width="0.5"/>
 <rect x="100.5" y="211.4" width="3.5" height="3.5" fill="#666" stroke="#333" stroke-width="0.5"/>
 <!-- columns w eye -->
 <rect x="118.5" y="201.5" width="12" height="13" fill="#e8e8e8" stroke="#8a8a8a" stroke-width="0.9"/>
 <path d="M118.5,204.3 L130.5,204.3 M122.7,201.5 L122.7,214.5 M126.5,201.5 L126.5,211" stroke="#8a8a8a" stroke-width="0.9"/>
 <path d="M124.2,213.3 C126,210.8 130.8,210.8 132.8,213.3 C130.8,215.8 126,215.8 124.2,213.3Z" fill="#8a8a8a"/>
 <circle cx="128.4" cy="213.3" r="1.5" fill="#eee"/><circle cx="128.4" cy="213.3" r="0.6" fill="#777"/>
 <!-- tree filter -->
 <rect x="151.3" y="200.5" width="3.4" height="3.4" fill="#fff" stroke="#333" stroke-width="0.8"/>
 <rect x="151.3" y="206" width="3.4" height="3.4" fill="#8fd0f0" stroke="#1e6a98" stroke-width="0.8"/>
 <rect x="151.3" y="211.8" width="3.4" height="3.4" fill="#fff" stroke="#333" stroke-width="0.8"/>
 <path d="M153,204 L153,206 M153,209.4 L153,211.8" stroke="#333" stroke-width="0.8"/>
 <path d="M157,208.3 L166,208.3 L162.5,211.5 L162.5,215.6 L160.5,215.6 L160.5,211.5Z" fill="#333"/>
 <!-- table -->
 <rect x="175.5" y="201.5" width="12" height="12.5" fill="#fff" stroke="#2a6a90" stroke-width="0.9"/>
 <rect x="175.5" y="201.5" width="3.5" height="12.5" fill="#8fd0f0" stroke="#2a6a90" stroke-width="0.9"/>
 <path d="M175.5,204.5 L187.5,204.5 M183,201.5 L183,204.5" stroke="#2a6a90" stroke-width="0.8"/>
 <path d="M181,206.8 L187,206.8 L190,209.5 L190,215.5 L181,215.5Z" fill="#f4f4f4" stroke="#777" stroke-width="0.8"/>
 <path d="M183,210.5 L183.5,210.5 M183,213 L183.5,213 M185,210.5 L188,210.5 M185,213 L188,213" stroke="#444" stroke-width="0.8"/>
</g>
 <!-- >> -->
 <path d="M233,205 L236,207.5 L233,210 M237.5,205 L240.5,207.5 L237.5,210" fill="none" stroke="#222" stroke-width="1.3"/>
 <!-- doc -->
 <path d="M252.5,199.5 L261,199.5 L265,203.5 L265,215 L252.5,215Z" fill="#f6f7f8" stroke="#9a9a9a" stroke-width="0.8"/>
 <rect x="252.8" y="209" width="12" height="5.8" fill="#dce6ee"/>
 <path d="M261,199.5 L261,203.5 L265,203.5" fill="#dde" stroke="#9a9a9a" stroke-width="0.6"/>
 <circle cx="255.5" cy="206.5" r="1" fill="none" stroke="#555" stroke-width="0.7"/><path d="M257.5,206.5 L262.5,206.5" stroke="#555"/>
 <circle cx="255.5" cy="210" r="1" fill="none" stroke="#555" stroke-width="0.7"/><path d="M257.5,210 L262.5,210" stroke="#555"/>
 <path d="M267,215 L267,217.5 L264.5,217.5Z" fill="#333"/>

 <!-- green cube -->
 <path d="M29,206 L38,206 L38,215.5 L29,215.5Z" fill="#42b03a"/>
 <path d="M29,206 L32.5,202.5 L41.5,202.5 L38,206Z" fill="#b8b8b8"/>
 <path d="M38,206 L41.5,202.5 L41.5,212 L38,215.5Z" fill="#7a7a7a"/>
 <!-- layers -->
 <path d="M203.5,213.5 L208,210 L220.5,210 L216,213.5Z" fill="#fff" stroke="#555" stroke-width="0.8"/>
 <path d="M203.5,209.5 L208,206 L220.5,206 L216,209.5Z" fill="#fff" stroke="#555" stroke-width="0.8"/>
 <path d="M203.5,205.5 L208,202 L220.5,202 L216,205.5Z" fill="#9ad4ee" stroke="#3a7aa0" stroke-width="0.8"/>
</g>
<!-- filter rows -->
<g id="fr">
<path d="M12.5,231.5 L27.5,231.5 L21.5,238.5 L21.5,245 L18.5,245 L18.5,238.5Z" fill="#f4f4f4" stroke="#666" stroke-width="0.9"/>
<path d="M214.5,235 L221.5,242 M221.5,235 L214.5,242" stroke="#999" stroke-width="0.9"/>
<path d="M234,236 L241,236 L237.5,240Z" fill="#555"/>
<path d="M253,237.5 L264,237.5 M258.5,232 L258.5,243" stroke="#9a9a9a" stroke-width="2.4"/>
</g>
<use href="#fr" y="241"/>
<!-- tree1 -->
<defs><linearGradient id="tg" x1="0" y1="0" x2="0.3" y2="1"><stop offset="0" stop-color="#d8d8d8"/><stop offset="1" stop-color="#6a6a6a"/></linearGradient></defs>
<path d="M11,266 C14,259.5 19,261 22,259 C24,258 25.5,257.2 27,256.8 L27.2,261 C25,262 23,263 21,265 C19,267 17.5,270 14,272.5Z" fill="url(#tg)"/>
<circle cx="14.5" cy="269.2" r="4.2" fill="#666" stroke="#444" stroke-width="0.6"/>
<path d="M12.3,267 L16.7,271.4 M16.7,267 L12.3,271.4" stroke="#ccc" stroke-width="0.7"/>
<path d="M19.3,278 L19.3,283" stroke="#aaa" stroke-width="0.8" stroke-dasharray="1.2,1"/>
<path d="M17,284 L21,287.3 L17,290.8Z" fill="#555"/>
<path d="M33.5,295 L33.5,289 Q33.5,286.2 36.2,286.2 L42,286.2 Q44.6,286.2 44.6,283.5 L44.6,279" fill="none" stroke="#8e8e8e" stroke-width="3"/>
<path d="M33.5,295.5 L33.5,289 Q33.5,286.2 36.2,286.2 L42,286.2 Q44.6,286.2 44.6,283.5 L44.6,278.5" fill="none" stroke="#f4f7f8" stroke-width="1.1"/>
<!-- tree2 -->
<path d="M12,506 L15,503 L26,503 L26,514 L23,517 L12,517Z" fill="#f6deaa" stroke="#c8a868" stroke-width="0.8"/>
<path d="M15.5,504 L18,503 L26,503 L26,511 L23.5,513 L15.5,513Z" fill="#a6d8ee" stroke="#3a80a8" stroke-width="0.8"/>
<path d="M15.5,506 L23.5,506 L23.5,513 M23.5,506 L26,503" fill="none" stroke="#3a80a8" stroke-width="0.6"/>
<path d="M19.4,522 L19.4,677.5" stroke="#b8bcbe" stroke-width="0.9"/>
<path d="M19.4,531.5 L27.5,531.5 M19.4,553.5 L27.5,553.5 M19.4,575.5 L27.5,575.5 M19.4,663.5 L27.5,663.5" stroke="#b8bcbe" stroke-width="0.9"/>
<g fill="none" stroke="#8a6a3a" stroke-width="1.1">
 <path d="M31.5,536 L36,527.5 L45.5,527.5 L41,536Z"/>
 <path d="M31.5,558 L36,549.5 L45.5,549.5 L41,558Z"/>
 <path d="M31.5,580 L36,571.5 L45.5,571.5 L41,580Z"/>
</g>
<g id="cube">
 <path d="M32.5,595 L35.5,592 L44.5,592 L44.5,601 L41.5,604 L32.5,604Z" fill="#a6d8ee" stroke="#2a80b0" stroke-width="0.9"/>
 <path d="M32.5,595 L41.5,595 L41.5,604 M41.5,595 L44.5,592" fill="none" stroke="#2a80b0" stroke-width="0.7"/>
 <path d="M41.5,595 L44.5,592 L44.5,601 L41.5,604Z" fill="#6ab8de"/>
</g>
<use href="#cube" y="22"/><use href="#cube" y="44"/>
<path d="M17,594.8 L21,598.2 L17,601.6Z M17,616.8 L21,620.2 L17,623.6Z M17,638.8 L21,642.2 L17,645.6Z" fill="#555"/>
<!-- line1 spool -->
<rect x="33" y="659" width="2" height="10.5" fill="#555"/>
<rect x="42.8" y="659" width="2" height="10.5" fill="#555"/>
<rect x="34.5" y="660.5" width="8.5" height="7.5" fill="url(#bl2)" stroke="#1e6a98" stroke-width="0.5"/>
<rect x="34.5" y="661" width="8.5" height="2.5" fill="#bfe6f8" opacity="0.8"/>
</svg>

<div class="t tr" style="left:32px;top:502px">CON_OT_TEST.ASM</div>
<div class="t tr" style="left:52px;top:524px">ASM_RIGHT</div>
<div class="t tr" style="left:52px;top:546px">ASM_TOP</div>
<div class="t tr" style="left:52px;top:568px">ASM_FRONT</div>
<div class="t tr" style="left:52px;top:590px">PLATE.PRT</div>
<div class="t tr" style="left:52px;top:612px">CON_OT.PRT</div>
<div class="t tr" style="left:52px;top:634px">CON_OT.PRT</div>
<div class="t tr" style="left:52px;top:656px">LINE1</div>
<div class="a" style="left:6.5px;top:675px;width:136px;height:26px;border-radius:24px/13px;background:#f4f400;transform:rotate(0.6deg)"></div>
<div class="a" style="left:51px;top:676px;width:78px;height:20px;background:#9fd000;border:1px dotted #333"></div>
<div class="t tr" style="left:52px;top:679px;color:#1e2a10">PRT0001.PRT</div>
<svg class="a" style="left:0;top:670px" width="60" height="30" viewBox="0 670 60 30">
<path d="M17,683.5 L21,686.8 L17,690Z" fill="#555"/>
<rect x="39" y="685" width="8" height="8" fill="#a8e060"/>
<rect x="31" y="680" width="5" height="11" rx="1.2" fill="#8cd040" stroke="#3a8a10" stroke-width="0.8"/>
<path d="M30,682.5 L31,682.5 M30,685.5 L31,685.5 M30,688.5 L31,688.5" stroke="#3a8a10"/>
<path d="M36,682 L41.6,679.5 M36,684 L41.6,681.5 M36,686 L41.6,683.5" stroke="#c8a040" stroke-width="0.8"/>
<rect x="41.6" y="678.2" width="4.8" height="6.1" fill="#2a9a20"/>
<path d="M42.8,686.8 L46.3,690.3 L42.8,693.8 L39.3,690.3Z" fill="none" stroke="#1a6a10" stroke-width="1.2"/>
</svg>

<div class="a" style="left:11px;top:703px;width:260px;height:1px;background:#5cb84a"></div>
<svg class="a" style="left:0;top:698px" width="280" height="12"><path d="M11,2 L15,5.5 L11,9Z M271,2 L267,5.5 L271,9Z" fill="#5cb84a"/></svg>

<div id="vp" class="a"></div>
<div class="a" style="left:650px;top:173px;width:578px;height:32px;background:#f7f8f9;border:1px solid #b5b9bc"></div>
<div class="a sel" style="left:863px;top:178px;width:23px;height:23px"></div>
<div class="a sel" style="left:1019px;top:178px;width:23px;height:23px"></div>
<div class="a sel" style="left:1045px;top:178px;width:23px;height:23px"></div>
<div class="a sel" style="left:1175px;top:178px;width:23px;height:23px"></div>
<!-- viewport toolbar icons -->
<svg class="a" style="left:640px;top:170px" width="600" height="40" viewBox="640 170 600 40">
<defs>
 <linearGradient id="barrel" x1="0" y1="0" x2="0" y2="1"><stop offset="0" stop-color="#f4f4f6"/><stop offset="1" stop-color="#9a9ea2"/></linearGradient>
 <radialGradient id="sph" cx="0.35" cy="0.35" r="0.75"><stop offset="0" stop-color="#fff"/><stop offset="1" stop-color="#888"/></radialGradient>
 <linearGradient id="gcab" x1="0" y1="0" x2="1" y2="1"><stop offset="0" stop-color="#ddd"/><stop offset="1" stop-color="#666"/></linearGradient>
</defs>
<!-- 1 eye camera -->
<path d="M658,186 C661,181 669,181 672,186 C669,191 661,191 658,186Z" fill="#444"/>
<circle cx="665" cy="186" r="2.3" fill="#fff"/><circle cx="665" cy="186" r="1.1" fill="#444"/>
<rect x="665" y="192.5" width="9" height="5" rx="0.8" fill="#333"/>
<rect x="667" y="191.3" width="3" height="1.5" fill="#333"/>
<circle cx="669.5" cy="195" r="1.3" fill="#fff"/>
<path d="M672,178.2 L677,178.2 L677,183Z" fill="#1a7fd0"/>
<!-- 2 gray eye clock -->
<path d="M684,186 C687,181 695,181 698,186 C695,191 687,191 684,186Z" fill="#a4a6a8"/>
<circle cx="691" cy="186" r="1.8" fill="#eee"/>
<circle cx="695" cy="192.3" r="4.6" fill="#f0f0f0" stroke="#b0b0b0" stroke-width="0.9"/>
<path d="M695,189.5 L695,192.5 L697,192.5" fill="none" stroke="#aaa" stroke-width="0.8"/>
<path d="M698,178.2 L703,178.2 L703,183Z" fill="#1a7fd0"/>
<!-- 3 zoom frame -->
<rect x="710.5" y="182" width="14" height="13" fill="#fafafa" stroke="#9a9a9a" stroke-width="0.9"/>
<path d="M720.5,191.5 L725,196" stroke="#999" stroke-width="2.4"/>
<path d="M720.5,191.5 L725,196" stroke="#eee" stroke-width="1"/>
<circle cx="717.6" cy="188.3" r="4.3" fill="#e6f2f8" stroke="#2a6a90" stroke-width="1"/>
<!-- 4 zoom in -->
<path d="M746,192 L751,196.5" stroke="#888" stroke-width="2.6"/>
<path d="M746,192 L751,196.5" stroke="#eee" stroke-width="1.1"/>
<circle cx="742" cy="187" r="5.3" fill="#eef6fa" stroke="#2a7aa8" stroke-width="1"/>
<path d="M739,187 L745,187 M742,184 L742,190" stroke="#1a5a80" stroke-width="1.8"/>
<!-- 5 zoom out -->
<path d="M771.8,192 L777,196.5" stroke="#888" stroke-width="2.6"/>
<path d="M771.8,192 L777,196.5" stroke="#eee" stroke-width="1.1"/>
<circle cx="767.8" cy="187" r="5.3" fill="#eef6fa" stroke="#2a7aa8" stroke-width="1"/>
<path d="M765,187 L770.6,187" stroke="#1a5a80" stroke-width="1.8"/>
<!-- 6 refit -->
<rect x="788.5" y="181.5" width="15" height="14.5" fill="#7cc0de" stroke="#9a9a9a" stroke-width="0.7"/>
<path d="M789,182 L803,182 L803,183 C797,185 793,190 789,195.5Z" fill="#f8f8f8"/>
<path d="M789.5,182.5 L803,182.5" stroke="#c8d8e0" stroke-width="1"/>
<path d="M791,194.5 L802,184" stroke="#1a4a70" stroke-width="1.3"/>
<!-- 7 shading spheres -->
<path d="M821,185 L826,181.5 L830,181.5 L830,192 L826,195.5 L821,195.5Z" fill="#9a9a9a"/>
<path d="M821,185 L826,181.5 L830,181.5 L825.5,185Z" fill="#e8e8e8"/>
<path d="M821,185 L825.5,185 L825.5,195.5 L821,195.5Z" fill="#d0d0d0"/>
<circle cx="819.5" cy="192" r="4.8" fill="url(#sph)"/>
<path d="M830.5,195.3 L830.5,198.8 L827.0,198.8Z" fill="#333"/>
<!-- 8 cube -->
<path d="M840.5,185 L844.5,181 L855.5,181 L855.5,192 L851.5,196.5 L840.5,196.5Z" fill="#f8fcfe" stroke="#1a5a80" stroke-width="1.1"/>
<path d="M844.5,181 L855.5,181 L851.5,185 L840.5,185Z" fill="#b8e0f0" stroke="#1a5a80" stroke-width="1"/>
<path d="M851.5,185 L855.5,181 L855.5,192 L851.5,196.5Z" fill="#5aa8d0" stroke="#1a5a80" stroke-width="1"/>
<path d="M857.0,195.3 L857.0,198.8 L853.5,198.8Z" fill="#333"/>
<!-- 9 bend eye (selected) -->
<path d="M866,181.5 L873,181.5 C877,181.5 881,185 881,190" fill="none" stroke="#333" stroke-width="1.1"/>
<path d="M866,184.5 L872,184.5 C875,184.5 877,186 877.5,190" fill="none" stroke="#333" stroke-width="1.1"/>
<path d="M870,184 L873,181.5 M876,190 L880,186" stroke="#2a8ad0" stroke-width="1"/>
<path d="M873,194.5 C875,192 879.5,192 881.5,194.5 C879.5,197 875,197 873,194.5Z" fill="#333"/>
<circle cx="877.2" cy="194.5" r="1" fill="#fff"/>
<path d="M880,178.5 L885.5,178.5 L885.5,183.5Z" fill="#1a7fd0"/>
<!-- 10 hexagon -->
<path d="M892.5,188 L896,181 L904,181 L908,188 L904,195.5 L896,195.5Z" fill="#d8f0fa" stroke="#4a9ac0" stroke-width="0.9"/>
<path d="M892.5,188 L904,188 L908,188 M900,181 L904,188" fill="none" stroke="#4a9ac0" stroke-width="0.8"/>
<path d="M904,181.5 L907.5,188 L904,188Z" fill="#6ab8de"/>
<rect x="903.5" y="190.5" width="5" height="6.5" fill="#fff" stroke="#777" stroke-width="0.7"/>
<path d="M905,192.5 L907,192.5 M905,194.5 L907,194.5" stroke="#555" stroke-width="0.6"/>
<path d="M909.5,195.3 L909.5,198.8 L906.0,198.8Z" fill="#333"/>
<!-- 11 table camera -->
<rect x="918" y="181.5" width="13" height="14.5" fill="#fafafa" stroke="#999" stroke-width="0.8"/>
<path d="M918,184.5 L931,184.5 M918,187.5 L931,187.5 M918,190.5 L925,190.5 M918,193.5 L925,193.5 M921,181.5 L921,196" stroke="#999" stroke-width="0.7"/>
<rect x="923.5" y="189.5" width="10.5" height="7.5" rx="1" fill="#3a3a3a"/>
<rect x="926" y="188.3" width="4" height="1.5" fill="#3a3a3a"/>
<circle cx="928.7" cy="193.2" r="2.2" fill="#ccc" stroke="#222" stroke-width="0.6"/>
<!-- 12 transparent cube -->
<path d="M944,186 L948,181 L959.5,181 L958,192 L953,196.5 L945,194Z" fill="#c8e6f4" stroke="#5aa0c8" stroke-width="0.9"/>
<path d="M944,186 L955,186 L959.5,181 M955,186 L953,196.5 M947,190 L955,186 L950,194" fill="none" stroke="#5aa0c8" stroke-width="0.8"/>
<!-- 13 section -->
<path d="M970.5,184.5 L974,181.5 L986,181.5 L986,194 L982,196.5 L970.5,196.5Z" fill="#eaf6fb" stroke="#b8d8e8" stroke-width="0.8"/>
<path d="M974,181.5 L986,181.5 L983,184.5 L970.5,184.5Z" fill="#b8e0f0"/>
<path d="M979,196.5 L986,189" stroke="#999" stroke-dasharray="1,1" stroke-width="1.5"/>
<path d="M970.5,196.5 L985.5,181" stroke="#1a4a80" stroke-width="1.3"/>
<path d="M988.0,195.3 L988.0,198.8 L984.5,198.8Z" fill="#333"/>
<!-- 14 datums -->
<path d="M996,181.5 L1000,185.5 M1000,181.5 L996,185.5" stroke="#8a6a30" stroke-width="1.1"/>
<path d="M1004,181.5 L1003,184.5 M1002,187 L1001,190 M1000,192.5 L999,195.5" stroke="#b09050" stroke-width="1.4"/>
<path d="M1006,186 L1006,192.5 L1011,192.5 M1004.5,187.5 L1006,185.5 L1007.5,187.5 M1009.5,191 L1011.5,192.5 L1009.5,194 M1006,192.5 L1003,195.5" fill="none" stroke="#6a5020" stroke-width="0.9"/>
<path d="M1013.5,195.3 L1013.5,198.8 L1010.0,198.8Z" fill="#333"/>
<!-- 15 rect arrow eye (selected) -->
<rect x="1022.5" y="181.5" width="9" height="6" fill="#fdf4dc" stroke="#777" stroke-width="0.8"/>
<path d="M1031.5,184.5 L1037.5,184.5 L1036,189.5" fill="none" stroke="#333" stroke-width="1"/>
<path d="M1034,188 L1036,190.5 L1038,187.5" fill="none" stroke="#333" stroke-width="1"/>
<path d="M1029.5,194.5 C1031.5,192 1036,192 1038,194.5 C1036,197 1031.5,197 1029.5,194.5Z" fill="#333"/>
<circle cx="1033.7" cy="194.5" r="1" fill="#fff"/>
<!-- 16 balls (selected) -->
<path d="M1051.6,183.6 L1055.5,189.5 L1061.5,189.5 M1055.5,189.5 L1051.6,194.5" stroke="#333" stroke-width="0.9" fill="none"/>
<circle cx="1051.6" cy="183.6" r="2.1" fill="#7cc070" stroke="#4a8a40" stroke-width="0.5"/>
<circle cx="1061.5" cy="189.5" r="2.1" fill="#f08070" stroke="#c05040" stroke-width="0.5"/>
<circle cx="1051.6" cy="194.5" r="2.1" fill="#3a8ac0" stroke="#1a5a90" stroke-width="0.5"/>
<!-- 17 gray triangle -->
<path d="M1081.5,182 L1075,194.5 L1088.5,194.5Z" fill="none" stroke="#b4b6b8" stroke-width="2"/>
<path d="M1084,191.5 L1089.5,194.5 L1084,197.5Z" fill="#d8d8d8" stroke="#b0b0b0" stroke-width="0.6"/>
<!-- 18 pause -->
<rect x="1102" y="183" width="3.3" height="10.6" fill="#a0a2a4"/>
<rect x="1109.8" y="183" width="3.3" height="10.6" fill="#a0a2a4"/>
<!-- 19 gray shape -->
<path d="M1126,183 L1142,183 L1142,194 L1128,194 C1130,191 1130,186 1126,183Z" fill="#c8c8c8"/>
<path d="M1126,183 L1142,183 L1142,185 L1130,185 C1129,184.5 1127.5,184 1126,183Z" fill="#aaa"/>
<!-- 20 curve -->
<path d="M1154,194.9 C1156,190 1159,189 1162,187.5 C1165,186 1166,184 1166.1,182.4" fill="none" stroke="#333" stroke-width="1.1"/>
<circle cx="1154" cy="194.9" r="1.9" fill="#5ac0ec" stroke="#2a90c8" stroke-width="0.5"/>
<circle cx="1166.1" cy="182.4" r="1.9" fill="#5ac0ec" stroke="#2a90c8" stroke-width="0.5"/>
<!-- 21 cable (selected) -->
<path d="M1182,192 C1186,188 1188,190 1190,186 C1191.5,183.5 1192,183 1193.4,182" fill="none" stroke="url(#gcab)" stroke-width="5" stroke-linecap="round"/>
<circle cx="1181.8" cy="192.9" r="3.8" fill="#777" stroke="#555" stroke-width="0.5"/>
<!-- 22 J1 -->
<path d="M1205,183 L1218,183 L1220,181.5 L1220,194 L1218,195.7 L1205,195.7 L1205,191 C1207,191 1207,187.5 1205,187.5Z" fill="#a6dcf2" stroke="#2a80b0" stroke-width="0.9"/>
<rect x="1208" y="185" width="8.5" height="8" fill="#222"/>
<path d="M1209.5,186.6 L1212,186.6 L1212,190.6 Q1212,192.2 1210.4,192.2 L1209.2,192.2 M1213.6,187.8 L1215.2,186.5 L1215.2,192.4" fill="none" stroke="#fff" stroke-width="1.3"/>
</svg>


<svg class="a" style="left:0;top:0" width="1245" height="738" viewBox="0 0 1245 738">
<g stroke="#0a3a0a" stroke-width="0.8" stroke-linejoin="round">
 <!-- base thickness -->
 <path d="M751.5,601.5 Q752,607 757.6,607.8 L1047.5,679.8 L1184,563.5 L1184,566.8 L1049,682.8 L757,611.2 Q750,609.5 750,603Z" fill="#22c422"/>
 <!-- base top -->
 <path d="M891,488.5 L1184,563.5 L1047.5,679.8 L757.6,607.8 Q753,607 752,602Z" fill="#00e400"/>
 <!-- fold strip -->
 <polygon points="891,488.5 892,491 758,607 754.5,601.5" fill="#0fc40f" stroke="none"/>
 <line x1="891" y1="488.5" x2="754.5" y2="601.5"/>
 <line x1="892" y1="491" x2="758" y2="607"/>
 <!-- wall -->
 <polygon points="826.5,392 901.5,329 891,488.5 754.5,601.5 761.5,501.5 823.5,451.5" fill="#009e00"/>
 <!-- wall left rim -->
 <path d="M826.5,392 L821.5,450 L759,499.5 L751.5,601.5 Q752,606 755,606.5 L754.5,601.5 L761.5,501.5 L823.5,451.5 L829,392Z" fill="#1ed41e"/>
 <!-- flange thickness -->
 <polygon points="771.5,372.5 823.5,385 829,389 826.5,393.5 823.5,388 772,376" fill="#2bd82b"/>
 <!-- bend strip -->
 <polygon points="823.5,385 896.5,326.5 901.5,329 899.5,331.5 829,389" fill="#17d817"/>
 <!-- flange top -->
 <polygon points="845.5,309 898,322 901.5,328 896.5,326.5 823.5,385 771.5,372.5" fill="#10e410"/>
 <line x1="823.5" y1="385" x2="896.5" y2="326.5"/>
 <line x1="829" y1="389" x2="899.5" y2="331.5"/>
</g>
<!-- cable -->
<path d="M897,330 C898.3,331.3 903.0,333.8 905,338 C907.0,342.2 908.3,349.3 909,355 C909.7,360.7 910.8,364.3 909,372 C907.2,379.7 902.8,391.0 898,401 C893.2,411.0 884.8,422.2 880,432 C875.2,441.8 871.0,451.2 869,460 C867.0,468.8 867.8,477.3 868,485 C868.2,492.7 867.2,498.0 870,506 C872.8,514.0 878.3,525.8 885,533 C891.7,540.2 901.0,544.5 910,549 C919.0,553.5 928.2,555.8 939,560 C949.8,564.2 966.0,569.0 975,574 C984.0,579.0 990.3,584.7 993,590 C995.7,595.3 993.5,600.5 991,606 C988.5,611.5 980.2,618.0 978,623 C975.8,628.0 975.5,632.3 978,636 C980.5,639.7 990.5,643.5 993,645" fill="none" stroke="#76733e" stroke-width="2.8" stroke-linecap="round"/>
<path d="M897,330 C898.3,331.3 903.0,333.8 905,338 C907.0,342.2 908.3,349.3 909,355 C909.7,360.7 910.8,364.3 909,372 C907.2,379.7 902.8,391.0 898,401 C893.2,411.0 884.8,422.2 880,432 C875.2,441.8 871.0,451.2 869,460 C867.0,468.8 867.8,477.3 868,485 C868.2,492.7 867.2,498.0 870,506 C872.8,514.0 878.3,525.8 885,533 C891.7,540.2 901.0,544.5 910,549 C919.0,553.5 928.2,555.8 939,560 C949.8,564.2 966.0,569.0 975,574 C984.0,579.0 990.3,584.7 993,590 C995.7,595.3 993.5,600.5 991,606 C988.5,611.5 980.2,618.0 978,623 C975.8,628.0 975.5,632.3 978,636 C980.5,639.7 990.5,643.5 993,645" fill="none" stroke="#aaa068" stroke-width="1.3" stroke-linecap="round"/>
<!-- top lug -->
<g stroke="#2a2a2a" stroke-width="0.7">
 <path d="M849,318 C853,315.5 866,315.5 871,319 L879,322 L882,324 L881,331 L872,330 C866,331.5 853,331 849,328 C845.5,325 846,320 849,318Z" fill="#a2a6aa" stroke-width="0.9"/>
 <ellipse cx="859.5" cy="323" rx="6" ry="3" fill="#10e410"/>
 <path d="M882,323.5 C887,324 893,326 897,328 L896,333 C892,332 886,331 881,330.5Z" fill="url(#barrel)"/>
</g>
<!-- bottom lug -->
<g stroke="#2a2a2a" stroke-width="0.7">
 <path d="M1009,647 L1019,653 C1028,651 1042,652.5 1045,657 C1047,662 1040,665.5 1030,665 C1022,664.5 1016,661 1011,657 L1008,655Z" fill="#a2a6aa" stroke-width="0.9"/>
 <ellipse cx="1032.5" cy="659" rx="5.5" ry="3" fill="#10e410"/>
 <path d="M994,643 C999,644 1005,646 1010,648 L1009,654 C1004,652.5 998,650.5 993,649Z" fill="url(#barrel)"/>
</g>
<!-- axes -->
<line x1="948" y1="492" x2="948" y2="474" stroke="#40b040" stroke-width="1"/>
<circle cx="948" cy="474" r="1.8" fill="#22c022"/>
<line x1="948" y1="492" x2="964" y2="495" stroke="#e04040" stroke-width="1"/>
<circle cx="964.5" cy="495" r="1.8" fill="#e02020"/>
<line x1="948" y1="492" x2="941" y2="497" stroke="#40c0e0" stroke-width="1"/>
<circle cx="940.5" cy="497.5" r="2" fill="#30d0f0"/>
</svg>
<!-- watermark -->
<div class="a" style="left:1057px;top:673px;font-size:34px;line-height:40px;color:#f06a3a;white-space:nowrap;transform:scaleX(1.14);transform-origin:0 0;letter-spacing:2px">野火</div>
<div class="a" style="left:1145px;top:671px;font-size:35px;line-height:40px;color:#111;white-space:nowrap;transform:scaleX(1.12);transform-origin:0 0">论坛</div>
<svg class="a" style="left:1110px;top:650px" width="40" height="50" viewBox="0 0 40 50"><path d="M15,4 C30,12 34,30 26,40 C24,43 22,44 19,45 C27,33 26,20 15,4Z" fill="#f26a2e"/><path d="M13,20 C21,24 24,31 21,40 C19,34 17,26 13,20Z" fill="#f26a2e"/></svg>
<div class="a" id="wmurl" style="left:1061px;top:713px;font-size:14.5px;line-height:18px;color:#a0a0a0;font-style:italic;white-space:nowrap;letter-spacing:1.7px">www.proewildfire.cn</div>
</body></html>
